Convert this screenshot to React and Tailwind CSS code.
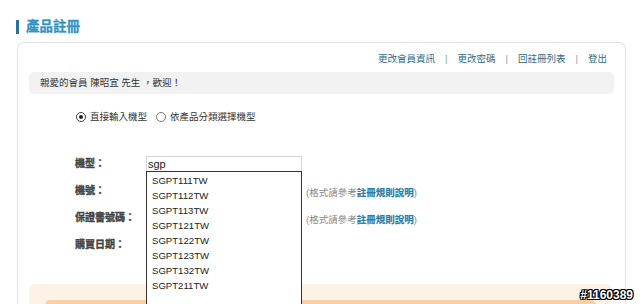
import React from "react";

const cjk = "font-['Liberation_Sans','Noto_Sans_CJK_TC',sans-serif]";
const label =
  "w-[71px] text-[10px] font-bold text-[#444] leading-[16px] [-webkit-text-stroke:0.35px_#444]";

function Radio({ checked, label }) {
  return (
    <div className="flex items-center gap-[4px]">
      <span
        className={
          "w-[10px] h-[10px] rounded-full border flex items-center justify-center bg-white " +
          (checked ? "border-[#444]" : "border-[#777]")
        }
      >
        {checked && <span className="w-[4px] h-[4px] rounded-full bg-[#222]" />}
      </span>
      <span className="text-[9.5px] leading-[14px] text-[#333]">{label}</span>
    </div>
  );
}

function Hint() {
  return (
    <span className="text-[9.5px] leading-[16px] text-[#888]">
      (格式請參考
      <span className="text-[#2b7ca6] font-bold [-webkit-text-stroke:0.2px_#2b7ca6]">註冊規則說明</span>)
    </span>
  );
}

const items = [
  "SGPT111TW",
  "SGPT112TW",
  "SGPT113TW",
  "SGPT121TW",
  "SGPT122TW",
  "SGPT123TW",
  "SGPT132TW",
  "SGPT211TW",
];

export default function App() {
  return (
    <div className={"relative w-[640px] h-[304px] overflow-hidden bg-white " + cjk}>
      {/* Title */}
      <div className="flex items-center gap-[7px] pl-[16px] pt-[19px] h-[35px]">
        <span className="w-[3px] h-[14px] bg-[#2a7299]" />
        <span className="text-[13.5px] leading-[16px] font-bold text-[#3492c2] [-webkit-text-stroke:0.3px_#3492c2]">
          產品註冊
        </span>
      </div>

      {/* Card */}
      <div className="mt-[7px] ml-[17px] w-[609px] h-[280px] border border-b-0 border-[#e2e2e2] rounded-t-[7px] px-[11px] pt-[9px]">
        {/* Links */}
        <div className="flex justify-end items-center gap-[10px] pr-[7px] h-[14px] text-[9.5px] leading-[14px] text-[#2b6b8c]">
          <span>更改會員資訊</span>
          <span className="text-[#7a9fb3]">|</span>
          <span>更改密碼</span>
          <span className="text-[#7a9fb3]">|</span>
          <span>回註冊列表</span>
          <span className="text-[#7a9fb3]">|</span>
          <span>登出</span>
        </div>

        {/* Welcome */}
        <div className="mt-[6px] h-[22px] bg-[#f2f2f2] rounded-[5px] pl-[11px] flex items-center text-[9.5px] text-[#333]">
          親愛的會員 陳昭宜 先生 ，歡迎！
        </div>

        {/* Radios */}
        <div className="mt-[16px] ml-[47px] flex items-center gap-[9px] h-[14px]">
          <Radio checked label="直接輸入機型" />
          <Radio label="依產品分類選擇機型" />
        </div>

        {/* Form */}
        <div className="mt-[32px] ml-[46px] flex flex-col gap-[11px]">
          <div className="flex items-center h-[16px]">
            <span className={label}>機型：</span>
            <div className="relative w-[156px] h-[16px]">
              <div className="w-full h-full border border-[#d6d6d6] border-b-0 bg-white pl-[1px] text-[11px] leading-[15px] text-[#222] font-['Liberation_Sans',sans-serif]">
                sgp
              </div>
              <div className="absolute left-0 top-[15px] w-[156px] h-[140px] border border-[#333] bg-white pt-[1px] pl-[5px] z-10">
                {items.map((t) => (
                  <div
                    key={t}
                    className="h-[15px] leading-[15px] text-[9.6px] text-[#222] font-['Liberation_Sans',sans-serif]"
                  >
                    {t}
                  </div>
                ))}
              </div>
            </div>
          </div>
          <div className="flex items-center h-[16px]">
            <span className={label}>機號：</span>
            <div className="w-[156px] h-[16px]" />
            <span className="ml-[4px]">
              <Hint />
            </span>
          </div>
          <div className="flex items-center h-[16px]">
            <span className={label}>保證書號碼：</span>
            <div className="w-[156px] h-[16px]" />
            <span className="ml-[4px]">
              <Hint />
            </span>
          </div>
          <div className="flex items-center h-[16px]">
            <span className={label}>購買日期：</span>
          </div>
        </div>

        {/* Bottom peach panel */}
        <div className="mt-[31px] w-[583px] h-[40px] bg-[#fdf2e6] rounded-t-[6px] pt-[16px] px-[16px]">
          <div className="h-[20px] bg-[#f9cfa5] rounded-[5px]" />
        </div>
      </div>

      {/* Watermark */}
      <div className="absolute right-[7px] bottom-[3px] text-[12px] leading-[12px] font-bold text-white font-['Liberation_Sans',sans-serif] [text-shadow:1px_0_0_#000,-1px_0_0_#000,0_1px_0_#000,0_-1px_0_#000,1px_1px_0_#000,-1px_-1px_0_#000,1px_-1px_0_#000,-1px_1px_0_#000] z-20">
        #1160389
      </div>
    </div>
  );
}
